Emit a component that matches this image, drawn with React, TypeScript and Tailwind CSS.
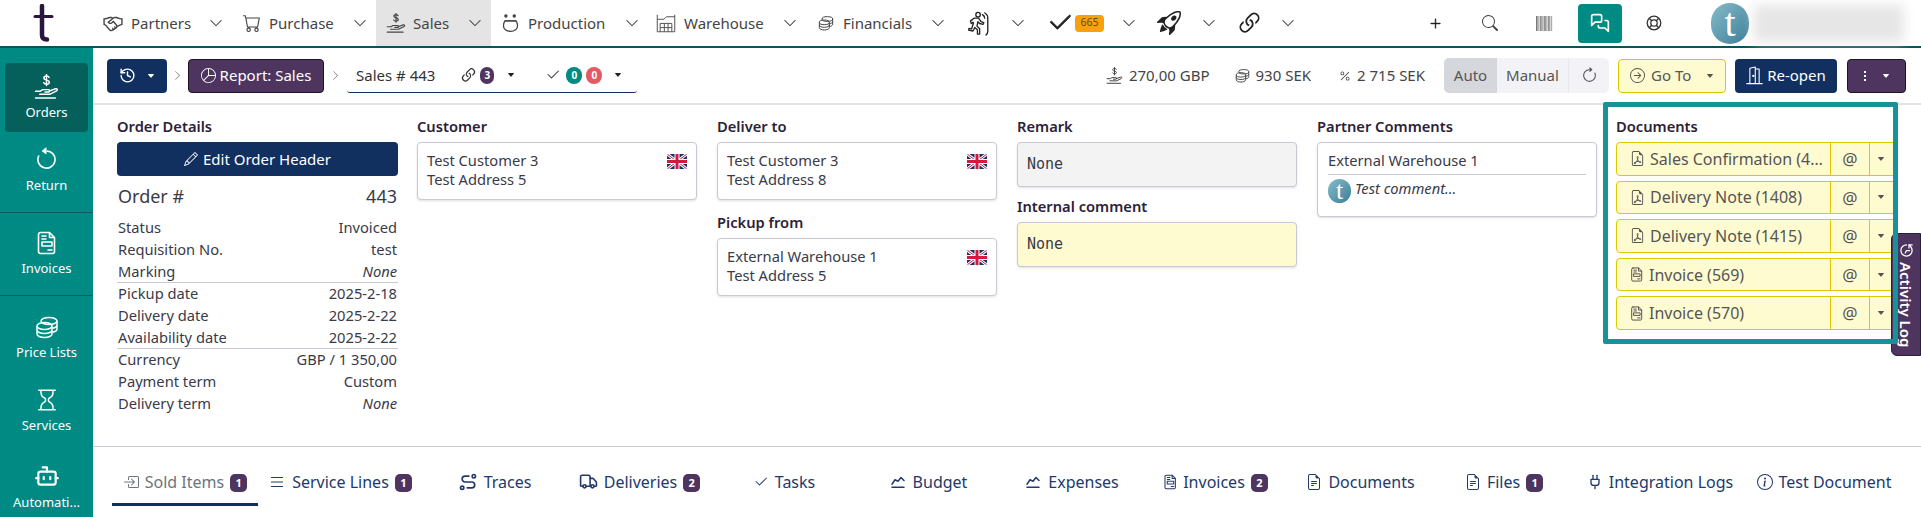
import React from "react";
import {
  BsPieChart, BsLink45Deg, BsCheck2, BsPencil, BsRocketTakeoff, BsSearch,
  BsArrowClockwise, BsArrowRightCircle, BsFileEarmarkPdf, BsArrowCounterclockwise, BsHourglass,
  BsList, BsFileEarmarkText, BsInfoCircle, BsPercent, BsChevronRight,
  BsChevronDown, BsCaretDownFill, BsPlusLg, BsBoxArrowInRight, BsCart,
} from "react-icons/bs";
import { LiaHandshake } from "react-icons/lia";
import { LuMessagesSquare, LuHistory, LuTruck, LuPlug, LuBot } from "react-icons/lu";
import { TbRoute, TbChartLine } from "react-icons/tb";

const font = { fontFamily: '"Noto Sans", "Open Sans", sans-serif' };
const mono = { fontFamily: '"DejaVu Sans Mono", monospace' };

function HandCoin({ className = "" }: { className?: string }) {
  return (
    <svg viewBox="0 0 24 24" fill="none" stroke="currentColor" strokeWidth="1.4" strokeLinecap="round" strokeLinejoin="round" className={className}>
      <path d="M14.5 3.3C14 2.400 13 2 12 2c-1.400 0-2.500.7-2.500 1.900 0 2.600 5.200 1.300 5.200 3.900 0 1.200-1.200 1.900-2.700 1.900-1.100 0-2.200-.5-2.700-1.400M12 .6v10.400" />
      <path d="M1.500 16.500H6l2.500-1.500h5.500c1.500 0 1.500 2.200 0 2.200h-3.500M14.500 16.500l6.200-2.300c1.700-.5 2.300 1.200 1 2L15 19.500H5.500" />
      <path d="M1.500 23h19" />
    </svg>
  );
}
function Coins({ className = "" }: { className?: string }) {
  return (
    <svg viewBox="0 0 24 24" fill="none" stroke="currentColor" strokeWidth="1.5" className={className}>
      <ellipse cx="14" cy="6" rx="8" ry="3.5" />
      <path d="M22 6v8c0 1.500-2 2.800-4.500 3.300M22 10c0 1.500-2 2.800-4.500 3.300" />
      <ellipse cx="9.500" cy="11" rx="7.500" ry="3.500" />
      <path d="M2 11v8c0 2 3.400 3.500 7.500 3.500S17 21 17 19v-8M2 15c0 2 3.400 3.500 7.500 3.500S17 17 17 15" />
    </svg>
  );
}
function InvoiceDoc({ className = "" }: { className?: string }) {
  return (
    <svg viewBox="0 0 20 24" fill="none" stroke="currentColor" strokeWidth="1.6" strokeLinejoin="round" strokeLinecap="round" className={className}>
      <path d="M3.500 1.500h9l5 5v14a2 2 0 0 1-2 2h-12a2 2 0 0 1-2-2v-17a2 2 0 0 1 2-2zM12.500 1.500v5h5" />
      <path d="M5 5h4M5 8h4M5 11h10v4H5zM11 19h4" />
    </svg>
  );
}
function Pot({ className = "" }: { className?: string }) {
  return (
    <svg viewBox="0 0 18 24" fill="none" stroke="currentColor" strokeWidth="1.5" strokeLinecap="round" className={className}>
      <path d="M2.500 9.500h13c1.500 2 2 3.500 2 5.500 0 4-3.500 7-8.500 7S.500 19 .500 15c0-2 .5-3.500 2-5.500z" />
      <path d="M2.500 9.500h13" />
      <circle cx="3.500" cy="3.500" r="1.300" fill="currentColor" />
      <circle cx="13.500" cy="3.500" r="1.300" fill="currentColor" />
    </svg>
  );
}
function Warehouse({ className = "" }: { className?: string }) {
  return (
    <svg viewBox="0 0 24 24" fill="none" stroke="currentColor" strokeWidth="1.2" className={className}>
      <path d="M1.500 2v20.500M22.500 2v20.500M1.500 7.500h8l3-3h10M1.500 22.500h21M5 22.500v-10h14v10M5 17.500h14M10 12.500v10M14.500 12.500v10" />
    </svg>
  );
}
function Runner({ className = "" }: { className?: string }) {
  return (
    <svg viewBox="0 0 26 28" fill="none" stroke="currentColor" strokeWidth="1.5" strokeLinecap="round" strokeLinejoin="round" className={className}>
      <circle cx="12.500" cy="4" r="2.500" />
      <path d="M4 11l4-3h5l3 4 3 1-.7 2-4-1-2-2-1 5 3 3v6h-2.500v-5l-3-2.500-2 4-5-1 .5-2 3 .5 2-6.500-.5-1-2 1.500z" />
      <path d="M20 2c2 2 3.500 2 3.500 5v16c0 2-1 3-2 4M17.500 4c1.500 1 2.500 2 2.500 4" />
    </svg>
  );
}
function Door({ className = "" }: { className?: string }) {
  return (
    <svg viewBox="0 0 22 24" fill="none" stroke="currentColor" strokeWidth="1.4" strokeLinecap="round" strokeLinejoin="round" className={className}>
      <path d="M1 22.500h20M5 22.500V2.500l7-1.500v21.500M12 3.500h5v19" />
      <circle cx="9.500" cy="12.500" r=".8" fill="currentColor" />
    </svg>
  );
}
function LifeRing({ className = "" }: { className?: string }) {
  return (
    <svg viewBox="0 0 20 20" fill="none" stroke="currentColor" strokeWidth="1.6" className={className}>
      <circle cx="10" cy="10" r="8.500" />
      <circle cx="10" cy="10" r="4" />
      <path d="M4 4l3.200 3.200M16 4l-3.200 3.200M4 16l3.200-3.200M16 16l-3.200-3.200" />
    </svg>
  );
}
function Barcode({ className = "" }: { className?: string }) {
  return (
    <svg viewBox="0 0 17 15" className={className} fill="#777">
      {[0, 1.5, 2.6, 4.2, 5.6, 6.7, 8.2, 9.5, 10.6, 12.2, 13.6, 15.4].map((x, i) => (
        <rect key={x} x={x} y="0" width={i % 3 === 0 ? 1.2 : 0.7} height="15" />
      ))}
    </svg>
  );
}
function Flag() {
  return (
    <svg viewBox="0 0 20 15" className="w-[20px] h-[15px] rounded-[2px]">
      <rect width="20" height="15" fill="#1b2f6b" />
      <path d="M0 0l20 15M20 0L0 15" stroke="#fff" strokeWidth="3" />
      <path d="M0 0l20 15M20 0L0 15" stroke="#d3193f" strokeWidth="1" />
      <path d="M10 0v15M0 7.500h20" stroke="#fff" strokeWidth="5" />
      <path d="M10 0v15M0 7.500h20" stroke="#d3193f" strokeWidth="3" />
    </svg>
  );
}
function Avatar({ box, size }: { box: string; size: string }) {
  return (
    <div className={`${box} rounded-full bg-gradient-to-br from-[#86bccb] to-[#3c7f97] flex items-center justify-center text-white shrink-0`}>
      <span className={size} style={{ fontFamily: '"Liberation Serif", serif' }}>t</span>
    </div>
  );
}

function Chev({ mr }: { mr: string }) {
  return <BsChevronDown className={`ml-auto ${mr} w-[14px] h-[14px] text-[#444] shrink-0`} />;
}

function NavText({ item, pl, icon, ml, text, mr }: { item: string; pl: string; icon: React.ReactNode; ml: string; text: string; mr: string }) {
  return (
    <div className={`flex items-center h-full shrink-0 ${item} ${pl}`}>
      {icon}
      <span className={`${ml} text-[15px] text-[#444]`}>{text}</span>
      <Chev mr={mr} />
    </div>
  );
}

function Badge({ n }: { n: string }) {
  return (
    <span className="mt-[3px] w-[17px] h-[18px] rounded-[5px] bg-[#4e3560] text-white text-[11px] font-bold flex items-center justify-center">{n}</span>
  );
}

function Header() {
  return (
    <div className="h-[48px] shrink-0 flex items-center border-b-2 border-[#0c5258] bg-white">
      <div className="w-[93px] h-full shrink-0 flex items-center justify-center">
        <svg viewBox="0 0 24 38" className="w-[24px] h-[38px] mr-[8px]" fill="none" stroke="#2b1640" strokeLinecap="round">
          <path d="M11 2v29c0 3 1.500 4.500 5 4.500" strokeWidth="4.5" />
          <path d="M4 12.500h17" strokeWidth="3" />
        </svg>
      </div>
      <NavText item="w-[145px]" pl="pl-[9px]" icon={<LiaHandshake className="w-[22px] h-[22px] text-[#444]" />} ml="ml-[7px]" text="Partners" mr="mr-[15px]" />
      <NavText item="w-[138px]" pl="pl-[5px]" icon={<BsCart className="w-[18px] h-[18px] text-[#444]" />} ml="ml-[8px]" text="Purchase" mr="mr-[9px]" />
      <NavText item="w-[115px] bg-[#e4e4e4]" pl="pl-[10px]" icon={<HandCoin className="w-[20px] h-[20px] text-[#444]" />} ml="ml-[7px]" text="Sales" mr="mr-[9px]" />
      <NavText item="w-[157px]" pl="pl-[12px]" icon={<Pot className="w-[15px] h-[20px] text-[#444]" />} ml="ml-[10px]" text="Production" mr="mr-[9px]" />
      <NavText item="w-[162px]" pl="pl-[8px]" icon={<Warehouse className="w-[20px] h-[20px] text-[#555]" />} ml="ml-[8px]" text="Warehouse" mr="mr-[13px]" />
      <NavText item="w-[148px]" pl="pl-[8px]" icon={<Coins className="w-[16px] h-[16px] text-[#444]" />} ml="ml-[9px]" text="Financials" mr="mr-[13px]" />
      <div className="w-[79px] h-full shrink-0 flex items-center pl-[9px]">
        <Runner className="w-[23px] h-[25px] text-[#222]" />
        <Chev mr="mr-[12px]" />
      </div>
      <div className="w-[110px] h-full shrink-0 flex items-center pl-[9px]">
        <BsCheck2 className="w-[28px] h-[28px] text-[#222] stroke-[0.5]" />
        <span className="ml-[1px] w-[29px] h-[17px] rounded-[4px] bg-[#f9a10d] text-[#5b4a2a] text-[10.5px] flex items-center justify-center">665</span>
        <Chev mr="mr-[11px]" />
      </div>
      <div className="w-[81px] h-full shrink-0 flex items-center pl-[10px]">
        <BsRocketTakeoff className="w-[24px] h-[24px] text-[#222]" />
        <Chev mr="mr-[12px]" />
      </div>
      <div className="w-[82px] h-full shrink-0 flex items-center pl-[7px]">
        <BsLink45Deg className="w-[29px] h-[29px] text-[#222]" />
        <Chev mr="mr-[15px]" />
      </div>
      <BsPlusLg className="ml-[119px] w-[13px] h-[13px] text-[#222] shrink-0 stroke-[0.6]" />
      <BsSearch className="ml-[40px] w-[16px] h-[16px] text-[#444] shrink-0" />
      <Barcode className="ml-[38px] w-[17px] h-[15px] shrink-0" />
      <div className="ml-[25px] w-[44px] h-[39px] rounded-[4px] bg-[#008a84] flex items-center justify-center shrink-0">
        <LuMessagesSquare className="w-[20px] h-[20px] text-white" />
      </div>
      <LifeRing className="ml-[24px] w-[16px] h-[16px] text-[#333] shrink-0" />
      <div className="ml-[49px]"><Avatar box="w-[38px] h-[41px]" size="text-[40px] leading-none" /></div>
      <div className="ml-[5px] w-[150px] h-[37px] bg-[#e6e6e6] blur-[6px] shrink-0" />
    </div>
  );
}

function Stat({ ml, icon, text }: { ml: string; icon: React.ReactNode; text: string }) {
  return (
    <div className={`flex items-center ${ml} text-[15px] text-[#444]`}>
      {icon}
      <span className="ml-[6px]">{text}</span>
    </div>
  );
}

function Toolbar() {
  return (
    <div className="h-[57px] shrink-0 flex items-center pl-[14px] pr-[15px] border-b-2 border-[#e3e3e3] bg-white">
      <div className="w-[60px] h-[34px] rounded-[4px] bg-[#11305f] flex items-center justify-center gap-[11px] text-white">
        <LuHistory className="w-[17px] h-[17px]" />
        <BsCaretDownFill className="w-[8px] h-[8px]" />
      </div>
      <BsChevronRight className="mx-[5px] w-[11px] h-[11px] text-[#777]" />
      <div className="w-[136px] h-[34px] rounded-[4px] bg-[#4e3560] border border-[#1f1428] flex items-center justify-center gap-[4px] text-white text-[15px]">
        <BsPieChart className="w-[15px] h-[15px]" />
        Report: Sales
      </div>
      <BsChevronRight className="ml-[6px] w-[11px] h-[11px] text-[#777]" />
      <div className="ml-[6px] w-[290px] h-[34px] border-b border-[#11305f] rounded-b-[3px] flex items-center text-[15px] text-[#333]">
        <span className="ml-[9px]">Sales # 443</span>
        <BsLink45Deg className="ml-[24px] w-[19px] h-[19px] text-[#333]" />
        <span className="ml-[2px] w-[14px] h-[17px] rounded-full bg-[#4e3560] text-white text-[10px] font-bold flex items-center justify-center">3</span>
        <BsCaretDownFill className="ml-[13px] w-[8px] h-[8px] text-[#222]" />
        <BsCheck2 className="ml-[30px] w-[16px] h-[16px] text-[#333]" />
        <span className="ml-[5px] w-[16px] h-[17px] rounded-full bg-[#008a84] text-white text-[10px] font-bold flex items-center justify-center">0</span>
        <span className="ml-[4px] w-[16px] h-[17px] rounded-full bg-[#e25a66] text-white text-[10px] font-bold flex items-center justify-center">0</span>
        <BsCaretDownFill className="ml-[12px] w-[8px] h-[8px] text-[#222]" />
      </div>
      <div className="ml-auto flex items-center">
        <Stat ml="" icon={<HandCoin className="w-[17px] h-[17px]" />} text="270,00 GBP" />
        <Stat ml="ml-[25px]" icon={<Coins className="w-[15px] h-[15px]" />} text="930 SEK" />
        <Stat ml="ml-[28px]" icon={<BsPercent className="w-[12px] h-[12px]" />} text="2 715 SEK" />
        <div className="ml-[19px] w-[165px] h-[35px] rounded-[5px] bg-[#f3f3f7] flex text-[15px] text-[#555]">
          <div className="w-[53px] bg-[#d5d7dd] rounded-l-[5px] flex items-center justify-center">Auto</div>
          <div className="w-[72px] border-r border-[#e8e8ec] flex items-center justify-center">Manual</div>
          <div className="flex-1 flex items-center justify-center"><BsArrowClockwise className="w-[17px] h-[17px]" /></div>
        </div>
        <div className="ml-[9px] w-[108px] h-[34px] rounded-[4px] bg-[#fffbd1] border border-[#dcc900] flex items-center text-[15px] text-[#555]">
          <BsArrowRightCircle className="ml-[11px] w-[15px] h-[15px]" />
          <span className="ml-[6px]">Go To</span>
          <BsCaretDownFill className="ml-[15px] w-[8px] h-[8px]" />
        </div>
        <div className="ml-[9px] w-[102px] h-[34px] rounded-[4px] bg-[#11305f] flex items-center justify-center gap-[4px] text-white text-[15px]">
          <Door className="w-[17px] h-[19px]" />
          Re-open
        </div>
        <div className="ml-[10px] w-[59px] h-[34px] rounded-[4px] bg-[#4e3560] border border-[#1f1428] flex items-center justify-center gap-[16px] text-white">
          <span className="flex flex-col gap-[2px]">
            <span className="w-[2px] h-[2px] bg-white" />
            <span className="w-[2px] h-[2px] bg-white" />
            <span className="w-[2px] h-[2px] bg-white" />
          </span>
          <BsCaretDownFill className="w-[8px] h-[8px]" />
        </div>
      </div>
    </div>
  );
}

function SideItem({ box, icon, label, active }: { box: string; icon: React.ReactNode; label: string; active?: boolean }) {
  return (
    <div className={`${box} flex flex-col items-center justify-center text-white text-[13px] shrink-0 ${active ? "bg-[#05605c] mx-[5px] rounded-[4px]" : ""}`}>
      {icon}
      <span className="mt-[4px] leading-[18px]">{label}</span>
    </div>
  );
}

function Sidebar() {
  return (
    <div className="w-[93px] shrink-0 bg-[#008a84] flex flex-col pt-[15px] overflow-hidden">
      <SideItem active box="h-[69px] pb-[1px]" icon={<HandCoin className="w-[25px] h-[25px]" />} label="Orders" />
      <SideItem box="h-[81px] border-b border-[#0a5e5c] pb-[3px]" icon={<BsArrowCounterclockwise className="w-[25px] h-[25px]" />} label="Return" />
      <SideItem box="h-[83px] border-b border-[#0a5e5c]" icon={<InvoiceDoc className="w-[20px] h-[24px]" />} label="Invoices" />
      <SideItem box="h-[83px]" icon={<Coins className="w-[24px] h-[24px]" />} label="Price Lists" />
      <SideItem box="h-[70px] pb-[7px]" icon={<BsHourglass className="w-[24px] h-[24px]" />} label="Services" />
      <SideItem box="h-[80px] pb-[5px]" icon={<LuBot className="w-[26px] h-[26px]" />} label="Automati..." />
    </div>
  );
}

function Heading({ children }: { children: React.ReactNode }) {
  return <div className="h-[20px] leading-[20px] mb-[6px] text-[14.7px] font-semibold text-[#2c2236]">{children}</div>;
}

function Row({ k, v, italic }: { k: string; v: string; italic?: boolean }) {
  return (
    <div className="h-[21.7px] flex items-center justify-between text-[14.7px] text-[#3a3a48] px-[1px]">
      <span>{k}</span>
      <span className={italic ? "italic" : ""}>{v}</span>
    </div>
  );
}

function AddrBox({ a, b }: { a: string; b: string }) {
  return (
    <div className="h-[58px] rounded-[4px] border border-[#c9c9d6] shadow-sm bg-white px-[9px] pt-[8px] flex justify-between text-[14.7px] leading-[19px] text-[#3a3a48]">
      <div>
        <div>{a}</div>
        <div>{b}</div>
      </div>
      <div className="mt-[3px]"><Flag /></div>
    </div>
  );
}

function DocRow({ icon, text }: { icon: React.ReactNode; text: string }) {
  return (
    <div className="h-[33.6px] flex rounded-[4px] border border-[#dcc900] bg-[#fffbd1] text-[16px] text-[#555]">
      <div className="w-[214px] flex items-center pl-[13px] pr-[3px] border-r border-[#dcc900]">
        {icon}
        <span className="ml-[5px] truncate">{text}</span>
      </div>
      <div className="w-[39px] flex items-center justify-center border-r border-[#dcc900] text-[17px]">@</div>
      <div className="flex-1 flex items-center justify-center pr-[4px]"><BsCaretDownFill className="w-[8px] h-[8px]" /></div>
    </div>
  );
}

function Details() {
  return (
    <div className="flex-1 min-h-0 relative pl-[24px] pt-[11px] grid grid-cols-[280px_280px_280px_280px_280px] gap-x-[20px] border-b border-[#c9c9d6]">
      <div className="w-[281px]">
        <Heading>Order Details</Heading>
        <div className="h-[34px] rounded-[4px] bg-[#11305f] flex items-center justify-center gap-[5px] text-white text-[15px]">
          <BsPencil className="w-[14px] h-[14px]" />
          Edit Order Header
        </div>
        <div className="h-[40.5px] flex items-center justify-between text-[18px] text-[#3a3a48] px-[1px]">
          <span>Order #</span>
          <span>443</span>
        </div>
        <Row k="Status" v="Invoiced" />
        <Row k="Requisition No." v="test" />
        <Row k="Marking" v="None" italic />
        <div className="border-t border-[#c9c9d6]" />
        <Row k="Pickup date" v="2025-2-18" />
        <Row k="Delivery date" v="2025-2-22" />
        <Row k="Availability date" v="2025-2-22" />
        <div className="border-t border-[#c9c9d6]" />
        <Row k="Currency" v="GBP / 1 350,00" />
        <Row k="Payment term" v="Custom" />
        <Row k="Delivery term" v="None" italic />
      </div>
      <div>
        <Heading>Customer</Heading>
        <AddrBox a="Test Customer 3" b="Test Address 5" />
      </div>
      <div>
        <Heading>Deliver to</Heading>
        <AddrBox a="Test Customer 3" b="Test Address 8" />
        <div className="mt-[12px]"><Heading>Pickup from</Heading></div>
        <AddrBox a="External Warehouse 1" b="Test Address 5" />
      </div>
      <div>
        <Heading>Remark</Heading>
        <div className="h-[45px] rounded-[4px] border border-[#c9c9d6] shadow-sm bg-[#f3f3f3] px-[9px] flex items-center text-[15px] text-[#3a3a48]" style={mono}>None</div>
        <div className="mt-[9px]"><Heading>Internal comment</Heading></div>
        <div className="h-[45px] rounded-[4px] border border-[#c9c9d6] shadow-sm bg-[#fffbd1] px-[9px] flex items-center text-[15px] text-[#3a3a48]" style={mono}>None</div>
      </div>
      <div>
        <Heading>Partner Comments</Heading>
        <div className="h-[75px] rounded-[4px] border border-[#c9c9d6] shadow-sm bg-white px-[10px] pt-[8px] text-[14.7px] text-[#3a3a48]">
          <div className="leading-[19px] pb-[4px] border-b border-[#c9c9d6]">External Warehouse 1</div>
          <div className="flex items-start mt-[4px]">
            <Avatar box="w-[23px] h-[24px]" size="text-[26px] leading-none" />
            <span className="ml-[4px] italic leading-[19px]">Test comment...</span>
          </div>
        </div>
      </div>
      <div className="absolute left-[1523px] top-[11px] w-[281px]">
        <Heading>Documents</Heading>
        <div className="flex flex-col gap-[5px]">
          <DocRow icon={<BsFileEarmarkPdf className="w-[15px] h-[15px] shrink-0" />} text="Sales Confirmation (443)" />
          <DocRow icon={<BsFileEarmarkPdf className="w-[15px] h-[15px] shrink-0" />} text="Delivery Note (1408)" />
          <DocRow icon={<BsFileEarmarkPdf className="w-[15px] h-[15px] shrink-0" />} text="Delivery Note (1415)" />
          <DocRow icon={<InvoiceDoc className="w-[14px] h-[15px] shrink-0" />} text="Invoice (569)" />
          <DocRow icon={<InvoiceDoc className="w-[14px] h-[15px] shrink-0" />} text="Invoice (570)" />
        </div>
      </div>
      <div className="absolute right-0 top-[128px] w-[30px] h-[123px] rounded-l-[6px] bg-[#4e3560] border border-[#2c1f3a] flex flex-col items-center pt-[9px] text-white text-[15px] font-semibold">
        <LuHistory className="w-[15px] h-[15px] mb-[4px] rotate-90" />
        <span className="[writing-mode:vertical-rl] leading-[20px]">Activity Log</span>
      </div>
      <div className="absolute right-[23px] top-[-3px] w-[295px] h-[242px] border-[5px] border-[#17929a] rounded-[2px] pointer-events-none" />
    </div>
  );
}

function Tab({ box, icon, text, badge, active }: { box: string; icon: React.ReactNode; text: string; badge?: string; active?: boolean }) {
  return (
    <div className={`${box} h-[59px] flex items-center justify-center gap-[6px] text-[16px] shrink-0 ${active ? "border-b-[3px] border-[#11305f] text-[#6c757d] pt-[13px]" : "text-[#22396b] pt-[10px]"}`}>
      {icon}
      <span>{text}</span>
      {badge ? <Badge n={badge} /> : null}
    </div>
  );
}

function Tabs() {
  const ic = "w-[16px] h-[16px] shrink-0";
  return (
    <div className="flex-1 flex pl-[19px] items-start bg-white">
      <Tab active box="w-[146px]" icon={<BsBoxArrowInRight className={ic} />} text="Sold Items" badge="1" />
      <Tab box="w-[164px]" icon={<BsList className="w-[18px] h-[18px] shrink-0" />} text="Service Lines" badge="1" />
      <Tab box="w-[145px]" icon={<TbRoute className="w-[20px] h-[20px] shrink-0" />} text="Traces" />
      <Tab box="w-[145px]" icon={<LuTruck className="w-[19px] h-[19px] shrink-0" />} text="Deliveries" badge="2" />
      <Tab box="w-[144px]" icon={<BsCheck2 className={ic} />} text="Tasks" />
      <Tab box="w-[144px]" icon={<TbChartLine className="w-[18px] h-[18px] shrink-0" />} text="Budget" />
      <Tab box="w-[143px]" icon={<TbChartLine className="w-[18px] h-[18px] shrink-0" />} text="Expenses" />
      <Tab box="w-[146px]" icon={<InvoiceDoc className="w-[13px] h-[16px] shrink-0" />} text="Invoices" badge="2" />
      <Tab box="w-[143px]" icon={<BsFileEarmarkText className={ic} />} text="Documents" />
      <Tab box="w-[144px]" icon={<BsFileEarmarkText className={ic} />} text="Files" badge="1" />
      <Tab box="w-[168px]" icon={<LuPlug className={ic} />} text="Integration Logs" />
      <Tab box="w-[160px]" icon={<BsInfoCircle className={ic} />} text="Test Document" />
    </div>
  );
}

export default function App() {
  return (
    <div className="h-screen w-full overflow-hidden flex flex-col bg-white" style={font}>
      <Header />
      <div className="flex-1 min-h-0 flex">
        <Sidebar />
        <div className="flex-1 min-w-0 flex flex-col relative">
          <Toolbar />
          <div className="h-[342px] shrink-0 flex flex-col"><Details /></div>
          <Tabs />
        </div>
      </div>
    </div>
  );
}
